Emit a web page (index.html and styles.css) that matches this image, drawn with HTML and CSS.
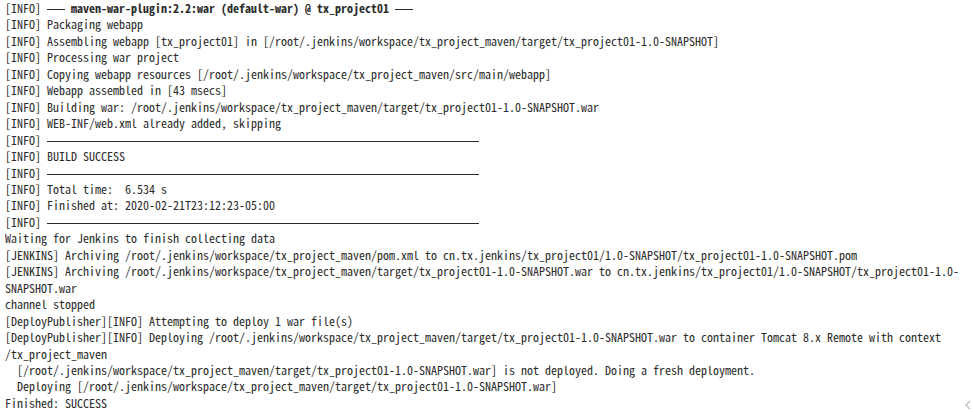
FILE: index.html
```html
<!DOCTYPE html>
<html>
<head>
<meta charset="utf-8">
<link rel="stylesheet" href="styles.css">
</head>
<body>
<div class="console">
<pre class="output">[INFO] <span class="rule">---</span> <b>maven-war-plugin:2.2:war (default-war) @ tx_project01</b> <span class="rule">---</span>
[INFO] Packaging webapp
[INFO] Assembling webapp [tx_project01] in [/root/.jenkins/workspace/tx_project_maven/target/tx_project01-1.0-SNAPSHOT]
[INFO] Processing war project
[INFO] Copying webapp resources [/root/.jenkins/workspace/tx_project_maven/src/main/webapp]
[INFO] Webapp assembled in [43 msecs]
[INFO] Building war: /root/.jenkins/workspace/tx_project_maven/target/tx_project01-1.0-SNAPSHOT.war
[INFO] WEB-INF/web.xml already added, skipping
[INFO] <span class="rule">------------------------------------------------------------------------</span>
[INFO] BUILD SUCCESS
[INFO] <span class="rule">------------------------------------------------------------------------</span>
[INFO] Total time:  6.534 s
[INFO] Finished at: 2020-02-21T23:12:23-05:00
[INFO] <span class="rule">------------------------------------------------------------------------</span>
Waiting for Jenkins to finish collecting data
[JENKINS] Archiving /root/.jenkins/workspace/tx_project_maven/pom.xml to cn.tx.jenkins/tx_project01/1.0-SNAPSHOT/tx_project01-1.0-SNAPSHOT.pom
[JENKINS] Archiving /root/.jenkins/workspace/tx_project_maven/target/tx_project01-1.0-SNAPSHOT.war to cn.tx.jenkins/tx_project01/1.0-SNAPSHOT/tx_project01-1.0-SNAPSHOT.war
channel stopped
[DeployPublisher][INFO] Attempting to deploy 1 war file(s)
[DeployPublisher][INFO] Deploying /root/.jenkins/workspace/tx_project_maven/target/tx_project01-1.0-SNAPSHOT.war to container Tomcat 8.x Remote with context /tx_project_maven
  [/root/.jenkins/workspace/tx_project_maven/target/tx_project01-1.0-SNAPSHOT.war] is not deployed. Doing a fresh deployment.
  Deploying [/root/.jenkins/workspace/tx_project_maven/target/tx_project01-1.0-SNAPSHOT.war]
Finished: SUCCESS</pre>
<svg class="scroll-arrow" width="8" height="10" viewBox="0 0 8 10"><path d="M6 1 L2 5 L6 9" fill="none" stroke="#c4c4c4" stroke-width="1.6"/></svg>
</div>
</body>
</html>
```
FILE: styles.css
```css
html, body {
  margin: 0;
  padding: 0;
  background: #ffffff;
}
.console {
  position: relative;
  width: 973px;
  height: 412px;
  overflow: hidden;
}
.output {
  margin: 0;
  padding: 0 8px 0 5px;
  font-family: "Noto Sans Mono CJK SC", "Liberation Mono", monospace;
  font-size: 12px;
  line-height: 16.45px;
  color: #2b2b2b;
  white-space: pre-wrap;
  word-wrap: break-word;
}
.output b {
  font-weight: bold;
}
.rule {
  background: linear-gradient(#2b2b2b, #2b2b2b) no-repeat 0 64% / 100% 1px;
}
.scroll-arrow {
  position: absolute;
  right: 1px;
  bottom: 2px;
}
```
